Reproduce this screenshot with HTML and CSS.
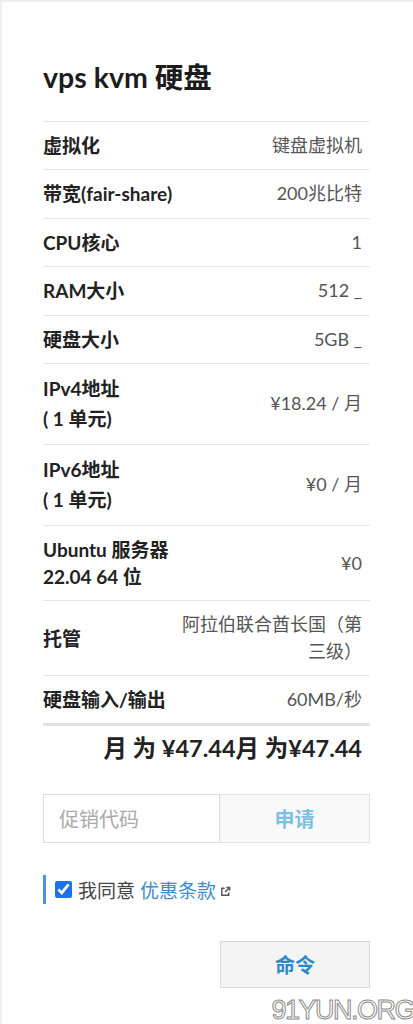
FILE: index.html
```html
<!DOCTYPE html>
<html lang="zh">
<head>
  <meta charset="UTF-8">
  <meta name="viewport" content="width=device-width, initial-scale=1.0">
  <title>vps kvm 硬盘</title>
  <link rel="stylesheet" href="styles.css">
</head>
<body>
  <div class="page">
    <h1 class="title">vps kvm 硬盘</h1>

    <div class="specs">
      <div class="row">
        <div class="label">虚拟化</div>
        <div class="value">键盘虚拟机</div>
      </div>
      <div class="row">
        <div class="label">带宽(fair-share)</div>
        <div class="value">200兆比特</div>
      </div>
      <div class="row">
        <div class="label">CPU核心</div>
        <div class="value">1</div>
      </div>
      <div class="row">
        <div class="label">RAM大小</div>
        <div class="value">512 _</div>
      </div>
      <div class="row">
        <div class="label">硬盘大小</div>
        <div class="value">5GB _</div>
      </div>
      <div class="row tall">
        <div class="label">IPv4地址<br>( 1 单元)</div>
        <div class="value">¥18.24 / 月</div>
      </div>
      <div class="row tall">
        <div class="label">IPv6地址<br>( 1 单元)</div>
        <div class="value">¥0 / 月</div>
      </div>
      <div class="row double">
        <div class="label">Ubuntu 服务器<br>22.04 64 位</div>
        <div class="value">¥0</div>
      </div>
      <div class="row double">
        <div class="label">托管</div>
        <div class="value narrow">阿拉伯联合酋长国（第三级）</div>
      </div>
      <div class="row last">
        <div class="label">硬盘输入/输出</div>
        <div class="value">60MB/秒</div>
      </div>
    </div>

    <div class="total">月 为 ¥47.44月 为¥47.44</div>

    <div class="promo">
      <input type="text" class="promo-input" placeholder="促销代码">
      <button class="promo-btn">申请</button>
    </div>

    <label class="agree">
      <input type="checkbox" checked>
      <span>我同意 <a href="#" class="terms">优惠条款</a></span>
      <svg class="ext" width="11" height="11" viewBox="0 0 12 12" fill="none" stroke="#555" stroke-width="1.6">
        <path d="M5 2.5H2v7.5h7.5V7"/>
        <path d="M7 1.5h3.5V5"/>
        <path d="M10.5 1.5L5.5 6.5"/>
      </svg>
    </label>

    <div class="actions">
      <button class="order-btn">命令</button>
    </div>

    <div class="watermark">91YUN.ORG</div>
  </div>
</body>
</html>
```

FILE: styles.css
```css
body {
  margin: 0;
  background: #fff;
  font-family: Lato, "Noto Sans CJK SC", sans-serif;
  color: #222;
  overflow: hidden;
}
.page {
  position: relative;
  box-sizing: border-box;
  height: 1024px;
  padding: 58px 43px 0 41px;
  border-top: 2px solid #eceef0;
  border-left: 2px solid #f0f0f0;
}
.title {
  margin: 0 0 27px;
  font-size: 28.5px;
  line-height: 34px;
  font-weight: 700;
  color: #1c1c1c;
}
.row {
  display: flex;
  align-items: center;
  justify-content: space-between;
  gap: 12px;
  padding: 10px 8px 10px 0;
  border-top: 1px solid #e6e6e6;
  font-size: 18px;
  line-height: 27.4px;
}
.row.tall .label {
  line-height: 30px;
}
.row.double {
  line-height: 27px;
}
.row.last {
  border-bottom: 3px solid #e2e2e2;
}
.label {
  font-size: 19px;
  font-weight: 700;
  color: #222;
}
.value {
  color: #555;
  text-align: right;
}
.value.narrow {
  max-width: 190px;
}
.total {
  padding: 6px 8px 0 0;
  font-size: 23.5px;
  line-height: 32px;
  font-weight: 700;
  color: #222;
  text-align: right;
}
.promo {
  display: flex;
  margin-top: 30px;
  height: 49px;
}
.promo-input {
  width: 177px;
  box-sizing: border-box;
  padding: 0 15px;
  border: 1px solid #dcdcdc;
  font-family: inherit;
  font-size: 20px;
  color: #333;
  outline: none;
}
.promo-input::placeholder {
  color: #aaa;
}
.promo-btn {
  flex: 1;
  border: 1px solid #e2e2e2;
  border-left: none;
  background: #f9f9f9;
  font-family: inherit;
  font-size: 20px;
  font-weight: 700;
  color: #7fc0e2;
}
.agree {
  display: flex;
  align-items: center;
  gap: 6px;
  margin-top: 32px;
  height: 29px;
  padding-left: 9px;
  border-left: 3px solid #4b8ef5;
  font-size: 19px;
  color: #444;
}
.agree input {
  width: 17px;
  height: 17px;
  margin: 0;
  accent-color: #1a73e8;
}
.terms {
  color: #3d8bc9;
  text-decoration: none;
}
.ext {
  margin-left: -2px;
  margin-top: 3px;
}
.actions {
  display: flex;
  justify-content: flex-end;
  margin-top: 37px;
}
.order-btn {
  width: 150px;
  height: 47px;
  border: 1px solid #d8d8d8;
  background: #f4f4f4;
  font-family: inherit;
  font-size: 20px;
  font-weight: 700;
  color: #2b8acb;
}
.watermark {
  position: absolute;
  right: -1px;
  bottom: -2px;
  font-family: "Liberation Sans", sans-serif;
  font-size: 27px;
  letter-spacing: -1.5px;
  color: #fff;
  -webkit-text-stroke: 1px #8a8a8a;
}
```
